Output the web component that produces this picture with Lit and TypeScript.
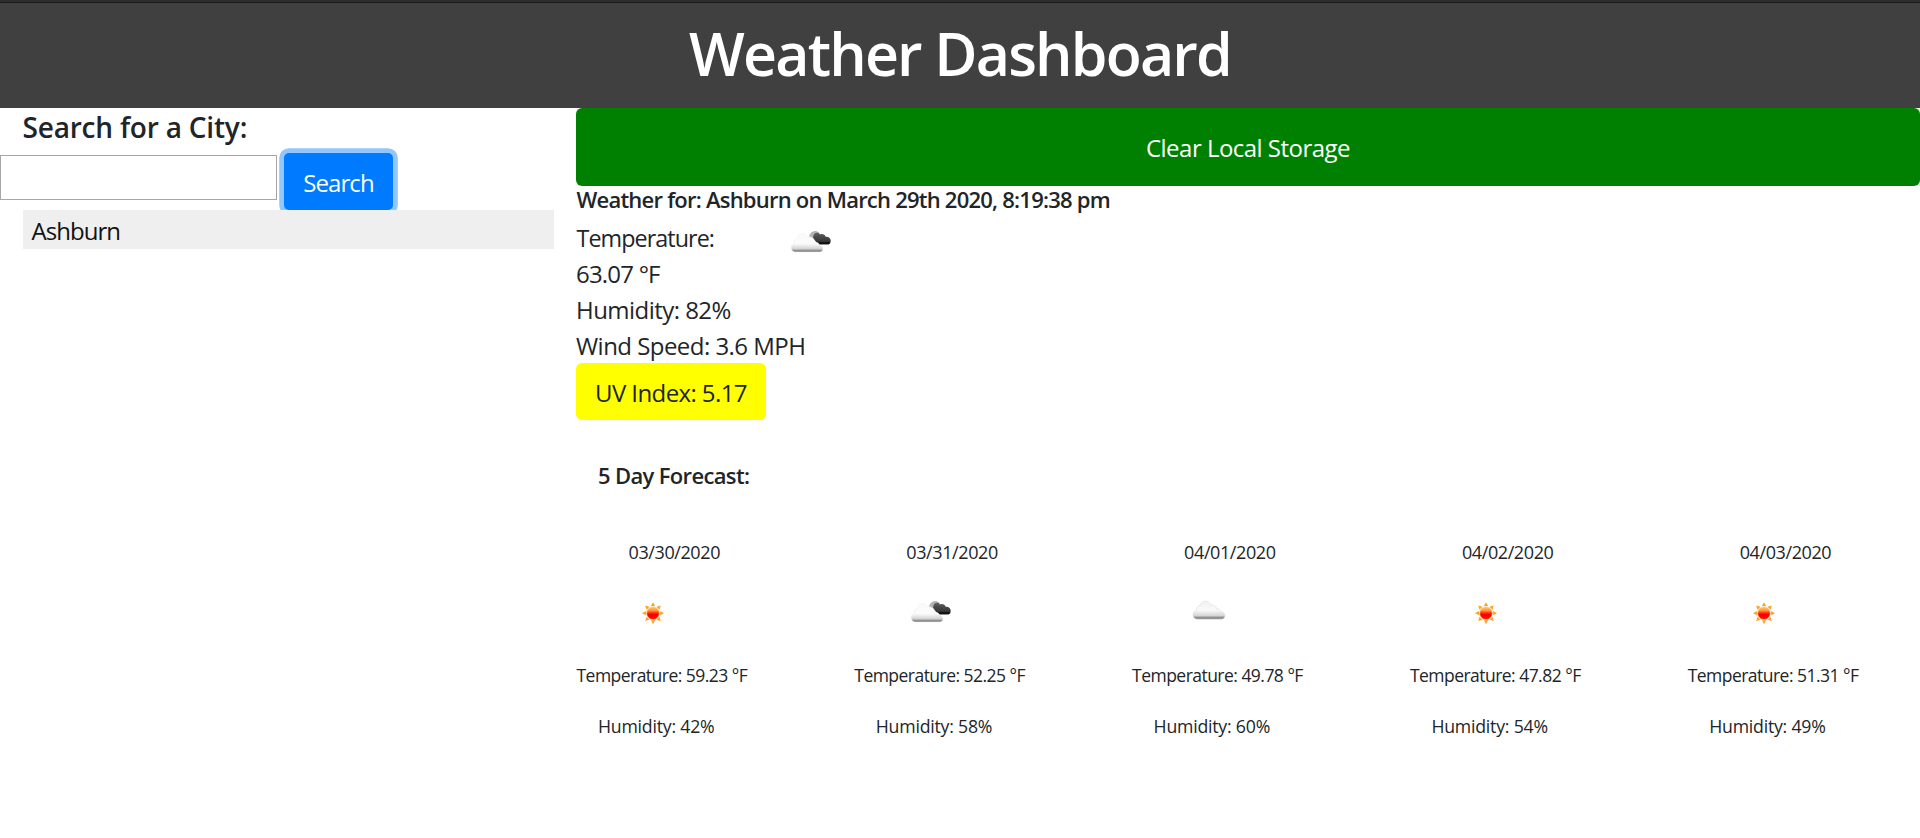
import { LitElement, html, css, svg } from "lit";
import { customElement, property } from "lit/decorators.js";

type Sky = "sun" | "broken" | "cloud";

interface Day {
  date: string;
  sky: Sky;
  temp: string;
  humidity: string;
}

const DAYS: Day[] = [
  { date: "03/30/2020", sky: "sun", temp: "59.23", humidity: "42" },
  { date: "03/31/2020", sky: "broken", temp: "52.25", humidity: "58" },
  { date: "04/01/2020", sky: "cloud", temp: "49.78", humidity: "60" },
  { date: "04/02/2020", sky: "sun", temp: "47.82", humidity: "54" },
  { date: "04/03/2020", sky: "sun", temp: "51.31", humidity: "49" },
];

@customElement("weather-icon")
class WeatherIcon extends LitElement {
  @property() sky: Sky = "sun";

  static styles = css`
    :host { display: block; width: 50px; height: 50px; }
    .pic { display: block; width: 50px; height: 50px; }
  `;

  private sun() {
    const rays = [0, 45, 90, 135, 180, 225, 270, 315];
    return svg`
      <defs>
        <linearGradient id="core" x1="0" y1="0" x2="0" y2="1">
          <stop offset="0" stop-color="#ffc875"/>
          <stop offset="0.28" stop-color="#ff9a3c"/>
          <stop offset="0.48" stop-color="#ff3008"/>
          <stop offset="0.6" stop-color="#ff0000"/>
          <stop offset="1" stop-color="#ff0a00"/>
        </linearGradient>
      </defs>
      ${rays.map((a) => svg`<path d="M22.9 18.1L25 14.2L27.1 18.1Z" fill="#ffa21f" transform=${`rotate(${a} 25 25.2)`}/>`)}
      <circle cx="25" cy="25.2" r="6.3" fill="url(#core)" stroke="#ffbe6a" stroke-width="0.7"/>`;
  }

  private broken() {
    return svg`
      <defs>
        <linearGradient id="dark" x1="0" y1="0" x2="0" y2="1">
          <stop offset="0" stop-color="#6a6a6a"/>
          <stop offset="0.45" stop-color="#484848"/>
          <stop offset="0.75" stop-color="#383838"/>
          <stop offset="0.88" stop-color="#080808"/>
          <stop offset="1" stop-color="#222"/>
        </linearGradient>
        <linearGradient id="white" x1="0" y1="0" x2="0" y2="1">
          <stop offset="0" stop-color="#fafafa"/>
          <stop offset="0.55" stop-color="#fbfbfb"/>
          <stop offset="0.82" stop-color="#d2d2d2"/>
          <stop offset="0.93" stop-color="#858585"/>
          <stop offset="1" stop-color="#999"/>
        </linearGradient>
      </defs>
      <g transform="translate(1 0)">
        <path d="M25 18.5C25 15.4 26 13.2 28.4 13.4C31 13.6 32.4 14.9 33 16.4C35.7 15.4 38.1 16.7 38.7 18.8C41.6 18.4 43.7 20.2 43.7 22.7C43.7 25.2 42.4 26.6 40 26.6H31Z" fill="url(#dark)"/>
        <path d="M21.8 19.8C22.4 15.6 24.5 13 28.3 13.2C30 13.3 31 13.9 31.7 14.8C28.4 14.2 26.6 15.2 26.1 19.4Z" fill="#b4b4b4"/>
        <path d="M8.5 34.1C5.8 34 4.3 32.2 4.3 29.7C4.3 27.4 5.2 25.9 7 25.2C6.8 22.7 8 20.8 10.4 20.4C11 17.5 12.8 15.8 15.5 15.8C18 15.8 19.6 16.9 20.5 18.7C24.4 18.3 27.4 20.8 27.7 24.5C30 23.8 32.2 25.1 32.5 27.2C34.8 27.4 35.8 28.8 35.8 30.8C35.8 32.8 34.8 34.1 32.6 34.1Z" fill="url(#white)" stroke="#ebebeb" stroke-width="0.4"/>
      </g>`;
  }

  private cloud() {
    return svg`
      <defs>
        <linearGradient id="soft" x1="0" y1="0" x2="0" y2="1">
          <stop offset="0" stop-color="#f1f1f1"/>
          <stop offset="0.5" stop-color="#f9f9f9"/>
          <stop offset="0.8" stop-color="#d6d6d6"/>
          <stop offset="0.94" stop-color="#7b7b7b"/>
          <stop offset="1" stop-color="#999"/>
        </linearGradient>
      </defs>
      <path d="M13 31.2C10.5 31.1 9 29.3 9 27C9 24.8 10.2 23 12.4 22.6C12.2 19.6 13.6 17.8 16 17.5C16.7 14.8 18.6 13.1 21.3 13.1C24 13.1 26 14.6 26.7 17.2C29.6 16 32.2 17.6 32.6 20.8C34.8 20.3 36.6 21.6 36.8 23.7C39.4 23.7 41 25.5 41 27.7C41 29.9 39.6 31.2 37.2 31.2Z" fill="url(#soft)" stroke="#dedede" stroke-width="0.6"/>`;
  }

  render() {
    const art = this.sky === "sun" ? this.sun() : this.sky === "broken" ? this.broken() : this.cloud();
    return html`<svg class="pic" viewBox="0 0 50 50">${art}</svg>`;
  }
}

@customElement("forecast-day")
class ForecastDay extends LitElement {
  @property({ attribute: false }) day!: Day;

  static styles = css`
    :host { display: block; font-size: 18px; line-height: 27px; }
    .date { padding-left: 52.5px; letter-spacing: -0.4px; }
    .icon { padding: 22px 0 24px 52px; }
    .temp { padding-left: 0.5px; font-size: 17.5px; letter-spacing: -0.53px; }
    .hum { padding: 24px 0 0 22px; font-size: 17.7px; letter-spacing: -0.22px; }
  `;

  render() {
    const d = this.day;
    return html`
      <div class="date">${d.date}</div>
      <div class="icon"><weather-icon .sky=${d.sky}></weather-icon></div>
      <div class="temp">Temperature: ${d.temp} °F</div>
      <div class="hum">Humidity: ${d.humidity}%</div>
    `;
  }
}

@customElement("app-root")
class AppRoot extends LitElement {
  static styles = css`
    :host {
      display: block;
      height: 838px;
      overflow: hidden;
      background: #fff;
      color: #212529;
      font: 24px/36px "Open Sans", "Noto Sans", sans-serif;
    }
    * { box-sizing: border-box; }
    h1, h3, h4 { margin: 0; font-weight: 600; }
    button { border: 0; margin: 0; font: inherit; }
    .header {
      height: 108px;
      border-top: 2px solid #2d2d2d;
      background: #404040;
      box-shadow: inset 0 1px #1c1c1c;
      color: #fff;
      text-align: center;
    }
    .title { padding-top: 16px; font-size: 59px; line-height: 70px; letter-spacing: -1.8px; }
    .body { display: grid; grid-template-columns: 576px 1344px; }
    .find { padding: 2px 0 0 22.5px; font-size: 28px; line-height: 34px; letter-spacing: -0.2px; }
    .form { display: flex; align-items: flex-start; height: 57px; margin-top: 9px; }
    .field { width: 277px; height: 45px; margin: 2px 7px 0 0; padding: 0 8px; border: 1px solid #a6a6a6; background: #fff; outline: 0; }
    .go {
      width: 109px;
      height: 57px;
      padding: 3px 0 0;
      border-radius: 5px;
      background: #007bff;
      box-shadow: 0 0 0 4.8px #91c6ff;
      color: #fff;
      letter-spacing: -0.9px;
    }
    .city {
      position: relative;
      height: 39px;
      margin: 0 22px 0 23px;
      padding: 3px 8.5px;
      background: #efefef;
      color: #111;
      letter-spacing: -0.95px;
    }
    .clear {
      display: block;
      width: 100%;
      height: 78px;
      padding: 2px 0 0;
      border-radius: 6px;
      background: #008000;
      color: #fff;
      letter-spacing: -0.52px;
    }
    .when { padding-left: 0.5px; font-size: 22px; line-height: 26px; letter-spacing: -0.77px; }
    .now { display: flex; height: 151px; padding-top: 8px; }
    .now weather-icon { margin-top: -2px; }
    .reading { width: 209.5px; white-space: nowrap; }
    .reading div:nth-child(1) { font-size: 23.3px; letter-spacing: -0.92px; padding-left: 0.5px; }
    .reading div:nth-child(2) { letter-spacing: -0.8px; }
    .reading div:nth-child(3), .reading div:nth-child(4) { letter-spacing: -0.54px; }
    .uv {
      display: block;
      width: 190px;
      height: 57px;
      padding: 2px 0 0;
      border-radius: 6px;
      background: #ff0;
      color: #212529;
      letter-spacing: -0.6px;
    }
    .five { padding: 41px 0 0 22px; font-size: 22px; line-height: 28px; letter-spacing: -0.65px; }
    .days { display: grid; grid-template-columns: repeat(5, 277.8px); padding-top: 50px; }
  `;

  render() {
    return html`
      <header class="header"><h1 class="title">Weather Dashboard</h1></header>
      <main class="body">
        <section>
          <h3 class="find">Search for a City:</h3>
          <div class="form">
            <input class="field" type="text" />
            <button class="go">Search</button>
          </div>
          <div class="city">Ashburn</div>
        </section>
        <section>
          <button class="clear">Clear Local Storage</button>
          <h4 class="when">Weather for: Ashburn on March 29th 2020, 8:19:38 pm</h4>
          <div class="now">
            <div class="reading">
              <div>Temperature:</div>
              <div>63.07 °F</div>
              <div>Humidity: 82%</div>
              <div>Wind Speed: 3.6 MPH</div>
            </div>
            <weather-icon .sky=${"broken"}></weather-icon>
          </div>
          <button class="uv">UV Index: 5.17</button>
          <h4 class="five">5 Day Forecast:</h4>
          <div class="days">${DAYS.map((d) => html`<forecast-day .day=${d}></forecast-day>`)}</div>
        </section>
      </main>
    `;
  }
}
